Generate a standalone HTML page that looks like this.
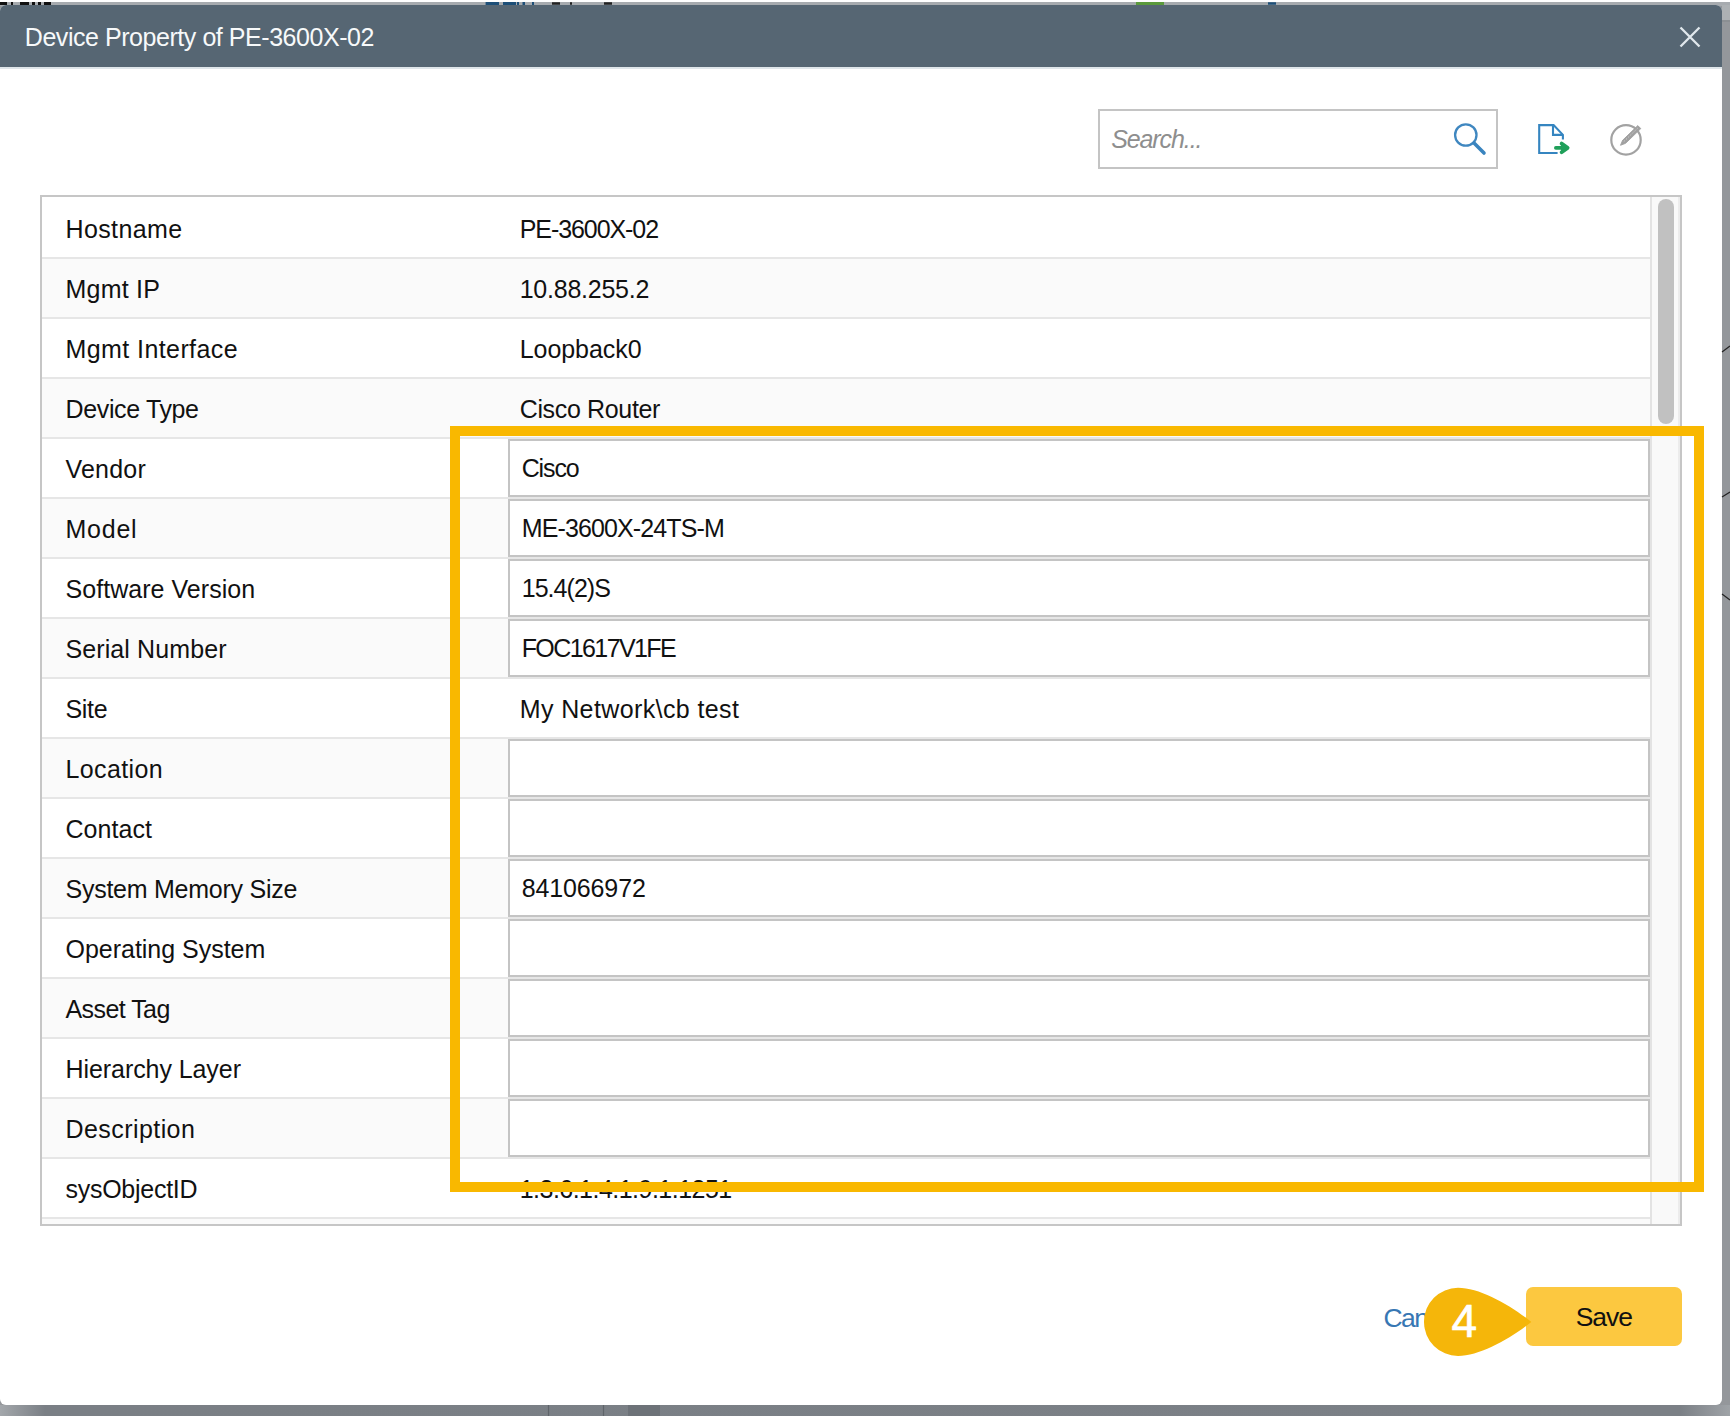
<!DOCTYPE html>
<html><head><meta charset="utf-8">
<style>
html,body{margin:0;padding:0;}
body{width:1730px;height:1416px;position:relative;overflow:hidden;background:#94979b;font-family:"Liberation Sans",sans-serif;}
.abs{position:absolute;}
.dlg{position:absolute;left:0;top:5px;width:1722px;height:1400px;background:#fff;border-radius:6px;overflow:hidden;}
.hdr{position:absolute;left:0;top:0;width:1722px;height:61.8px;background:#566673;border-bottom:2px solid #dfe6ea;}
.title{position:absolute;left:24.8px;top:17px;font-size:25px;color:#f7f9fa;letter-spacing:-0.45px;white-space:pre;line-height:30px;}
.search{position:absolute;left:1098px;top:104px;width:396px;height:56px;border:2px solid #c4c4c4;background:#fff;}
.search .ph{position:absolute;left:11.2px;top:13px;font-size:25px;font-style:italic;color:#8e8e8e;line-height:30px;letter-spacing:-1.1px;white-space:pre;}
.tbl{position:absolute;left:40px;top:190px;width:1638px;height:1027px;border:2px solid #c6c6c6;overflow:hidden;background:#fff;}
.row{position:absolute;left:0;width:1608px;height:60px;background:#fff;}
.row.alt{background:#fafafa;}
.sep{position:absolute;left:0;width:1608px;height:2px;background:#e6e6e6;}
.lab{position:absolute;left:23.5px;top:17px;font-size:25px;color:#111;line-height:30px;white-space:pre;}
.val{position:absolute;left:477.7px;top:17px;font-size:25px;color:#111;line-height:30px;white-space:pre;}
.inp{position:absolute;left:466px;top:2px;width:1138px;height:54px;border:2px solid #c4c4c4;background:#fff;}
.inp span{position:absolute;left:11.7px;top:12px;font-size:25px;color:#111;line-height:30px;white-space:pre;}
.track{position:absolute;left:1608px;top:0;width:26px;height:1027px;background:#f9f9f9;border-left:2px solid #e3e3e3;border-right:2px solid #ececec;}
.thumb{position:absolute;left:6px;top:2px;width:16px;height:225px;border-radius:8px;background:#c1c1c1;}
.cancel{position:absolute;left:1383.4px;top:1297.8px;font-size:26.5px;color:#3777b3;line-height:30px;white-space:pre;letter-spacing:-1.5px;}
.save{position:absolute;left:1526px;top:1282px;width:156px;height:59px;border-radius:7px;background:#fcc840;}
.save span{position:absolute;left:49.8px;top:15px;font-size:26.5px;color:#111;line-height:30px;letter-spacing:-1.1px;white-space:pre;}
svg.ov{position:absolute;left:0;top:0;}
</style></head><body>
<div class="abs" style="left:0;top:0;width:1730px;height:2px;background:#fff"></div>
<div class="abs" style="left:0;top:2px;width:1730px;height:4px;background:#a7abaf"></div>
<div class="abs" style="left:1722px;top:5px;width:8px;height:16px;background:#adb1b4"></div>
<div class="abs" style="left:1722px;top:20px;width:8px;height:2px;background:#8b8f93"></div>
<div class="abs" style="left:0;top:1405px;width:1730px;height:11px;background:linear-gradient(90deg,#a3a7ab 0px,#7a7f85 45px,#7b8086 1680px,#9fa3a7 1730px)"></div>
<div class="dlg">
 <div class="hdr"><div class="title">Device Property of PE-3600X-02</div></div>
 <div class="search"><span class="ph">Search...</span></div>
 <div class="tbl">
<div class="row" style="top:0px"><span class="lab" style="letter-spacing:0.371px">Hostname</span><span class="val" style="letter-spacing:-1.07px">PE-3600X-02</span></div>
<div class="row alt" style="top:60px"><span class="lab" style="letter-spacing:0.233px">Mgmt IP</span><span class="val" style="letter-spacing:-0.24px">10.88.255.2</span></div>
<div class="sep" style="top:60px"></div>
<div class="row" style="top:120px"><span class="lab" style="letter-spacing:0.415px">Mgmt Interface</span><span class="val" style="letter-spacing:-0.05px">Loopback0</span></div>
<div class="sep" style="top:120px"></div>
<div class="row alt" style="top:180px"><span class="lab" style="letter-spacing:-0.36px">Device Type</span><span class="val" style="letter-spacing:-0.345px">Cisco Router</span></div>
<div class="sep" style="top:180px"></div>
<div class="row" style="top:240px"><span class="lab" style="letter-spacing:0.2px">Vendor</span><div class="inp"><span style="letter-spacing:-1.125px">Cisco</span></div></div>
<div class="sep" style="top:240px"></div>
<div class="row alt" style="top:300px"><span class="lab" style="letter-spacing:0.75px">Model</span><div class="inp"><span style="letter-spacing:-0.871px">ME-3600X-24TS-M</span></div></div>
<div class="sep" style="top:300px"></div>
<div class="row" style="top:360px"><span class="lab" style="letter-spacing:0.047px">Software Version</span><div class="inp"><span style="letter-spacing:-0.957px">15.4(2)S</span></div></div>
<div class="sep" style="top:360px"></div>
<div class="row alt" style="top:420px"><span class="lab" style="letter-spacing:0.1px">Serial Number</span><div class="inp"><span style="letter-spacing:-1.59px">FOC1617V1FE</span></div></div>
<div class="sep" style="top:420px"></div>
<div class="row" style="top:480px"><span class="lab" style="letter-spacing:-0.333px">Site</span><span class="val" style="letter-spacing:0.394px">My Network\cb test</span></div>
<div class="sep" style="top:480px"></div>
<div class="row alt" style="top:540px"><span class="lab" style="letter-spacing:0.371px">Location</span><div class="inp"><span style="letter-spacing:0px"></span></div></div>
<div class="sep" style="top:540px"></div>
<div class="row" style="top:600px"><span class="lab" style="letter-spacing:0.033px">Contact</span><div class="inp"><span style="letter-spacing:0px"></span></div></div>
<div class="sep" style="top:600px"></div>
<div class="row alt" style="top:660px"><span class="lab" style="letter-spacing:-0.253px">System Memory Size</span><div class="inp"><span style="letter-spacing:-0.125px">841066972</span></div></div>
<div class="sep" style="top:660px"></div>
<div class="row" style="top:720px"><span class="lab" style="letter-spacing:-0.02px">Operating System</span><div class="inp"><span style="letter-spacing:0px"></span></div></div>
<div class="sep" style="top:720px"></div>
<div class="row alt" style="top:780px"><span class="lab" style="letter-spacing:-0.562px">Asset Tag</span><div class="inp"><span style="letter-spacing:0px"></span></div></div>
<div class="sep" style="top:780px"></div>
<div class="row" style="top:840px"><span class="lab" style="letter-spacing:-0.071px">Hierarchy Layer</span><div class="inp"><span style="letter-spacing:0px"></span></div></div>
<div class="sep" style="top:840px"></div>
<div class="row alt" style="top:900px"><span class="lab" style="letter-spacing:0.43px">Description</span><div class="inp"><span style="letter-spacing:0px"></span></div></div>
<div class="sep" style="top:900px"></div>
<div class="row" style="top:960px"><span class="lab" style="letter-spacing:-0.27px">sysObjectID</span><span class="val" style="letter-spacing:-0.521px">1.3.6.1.4.1.9.1.1251</span></div>
<div class="sep" style="top:960px"></div>
<div class="row alt" style="top:1020px"><span class="lab" style="letter-spacing:0px"></span><span class="val" style="letter-spacing:0px"></span></div>
<div class="sep" style="top:1020px"></div>
  <div class="track"><div class="thumb"></div></div>
 </div>
 <div class="cancel">Cancel</div>
 <div class="save"><span>Save</span></div>
</div>
<svg class="ov" width="1730" height="1416" viewBox="0 0 1730 1416">
 <!-- top strip fragments -->
 <path d="M0 3.5H7M11 3.5H13M20 3.5H29M32 3.5H35M38 3.5H41M44 3.5H51" stroke="#111" stroke-width="3"/>
 <path d="M485.6 3.5H499M503 3.5H516M517 3.5H519M522.5 3.5H525M532 3.5H534" stroke="#1d4f78" stroke-width="3"/>
 <path d="M552 3.5H560M570 3.5H572M604 3.5H612" stroke="#222" stroke-width="2.5"/>
 <path d="M1136 3.5H1164" stroke="#5b9a3c" stroke-width="3"/>
 <path d="M1268 3.5H1276" stroke="#1d4f78" stroke-width="2.5"/>
 <!-- close -->
 <path d="M1680.5 27.5L1699.5 46.5M1699.5 27.5L1680.5 46.5" stroke="#e1e8ed" stroke-width="2.3"/>
 <!-- search icon -->
 <circle cx="1465.8" cy="135" r="10.7" fill="none" stroke="#3f87c0" stroke-width="2.3"/>
 <path d="M1474 143L1484 153" stroke="#3a84bf" stroke-width="3.6" stroke-linecap="round"/>
 <!-- export icon -->
 <path d="M1557.6 153H1539.2V125.1H1553.6L1562.9 134.8V139.5" fill="none" stroke="#3585c0" stroke-width="2.1" stroke-linejoin="miter"/>
 <path d="M1553 125.1V134.9H1562.5" fill="none" stroke="#3585c0" stroke-width="2.1"/>
 <path d="M1555.8 147.9H1564" stroke="#20a05a" stroke-width="3.6" stroke-linecap="round"/>
 <path d="M1561.6 143.6L1567.6 147.9L1561.6 152.2" fill="none" stroke="#20a05a" stroke-width="3.8" stroke-linecap="round" stroke-linejoin="round"/>
 <path d="M1561 144L1567 147.9L1561 151.8Z" fill="#20a05a"/>
 <!-- edit icon -->
 <circle cx="1626" cy="139.9" r="14.7" fill="none" stroke="#a2a2a2" stroke-width="2.2"/>
 <path d="M1620.5 145.3L1622.6 140.3L1637.8 125.6L1640.8 128.6L1625.6 143.3Z" fill="#a0a0a0" stroke="#a0a0a0" stroke-width="0.9" stroke-linejoin="round"/>
 <path d="M1623.8 141.6L1638.4 127.4" stroke="#d0d0d0" stroke-width="0.9" stroke-dasharray="1.5 1.5"/>
 <!-- annotation -->
 <rect x="455" y="431" width="1244" height="756" fill="none" stroke="#f9b800" stroke-width="10"/>
 <!-- marker -->
 <path d="M1458 1287.8C1480 1287.8 1510 1305 1531.3 1321.9C1510 1338.8 1480 1355.9 1458 1355.9A34 34 0 0 1 1458 1287.8Z" fill="#f5b60a"/>
 <text x="1451.6" y="1337.2" font-family="Liberation Sans" font-size="46" fill="#fff" stroke="#fff" stroke-width="0.7">4</text>
 <path d="M548.5 1405V1416M603.5 1405V1416" stroke="#5f646a" stroke-width="1.2"/>
 <rect x="628" y="1405" width="32" height="11" fill="#6d7278"/>
 <!-- right strip marks -->
 <path d="M1722 352L1730 346M1722 497L1730 492M1722 594L1730 600" stroke="#222" stroke-width="1.2"/>
</svg>
</body></html>
